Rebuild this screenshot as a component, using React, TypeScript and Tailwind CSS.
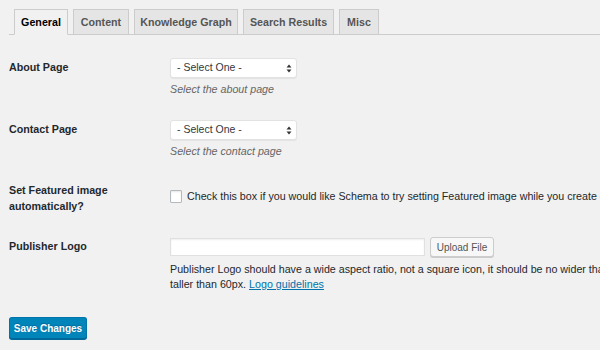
import { useState } from "react";

const tabs = [
  { label: "General", w: "w-[54px]" },
  { label: "Content", w: "w-[56px]" },
  { label: "Knowledge Graph", w: "w-[104px]" },
  { label: "Search Results", w: "w-[91px]" },
  { label: "Misc", w: "w-[40px]" },
];

const SelectBox = () => (
  <div className="w-[127px] h-[20px] bg-white border border-[#e2e2e2] rounded-[3px] shadow-[0_1px_1px_rgba(0,0,0,0.06)] flex items-center justify-between pl-[6px] pr-[4px] text-[10.5px] text-[#32373c]">
    <span>- Select One -</span>
    <svg width="6" height="9" viewBox="0 0 6 9">
      <path d="M0.5 3.5 L3 0.5 L5.5 3.5 Z" fill="#333" />
      <path d="M0.5 5.5 L3 8.5 L5.5 5.5 Z" fill="#333" />
    </svg>
  </div>
);

const App = () => {
  const [active, setActive] = useState("General");

  return (
    <div
      className="w-[600px] h-[350px] overflow-hidden bg-[#f1f1f1] text-[#23282d] pl-[9px] pt-[9px]"
      style={{ fontFamily: '"Liberation Sans", Arial, sans-serif' }}
    >
      {/* tab strip */}
      <div className="flex h-[26px] border-b border-[#cccccc] pl-[5px] gap-[5px] w-[700px]">
        {tabs.map((tab) => {
          const on = tab.label === active;
          return (
            <button
              key={tab.label}
              onClick={() => setActive(tab.label)}
              className={`${tab.w} h-[26px] border border-[#cccccc] flex items-center justify-center text-[10.7px] font-bold ${
                on
                  ? "bg-[#f1f1f1] text-black border-b-[#f1f1f1]"
                  : "bg-[#e5e5e5] text-[#555555]"
              }`}
            >
              {tab.label}
            </button>
          );
        })}
      </div>

      {/* About Page */}
      <div className="flex mt-[23px]">
        <div className="w-[161px] shrink-0 text-[10.7px] font-bold leading-[16px] pt-[1px]">About Page</div>
        <div>
          <SelectBox />
          <p className="mt-[4px] text-[10.7px] italic leading-[14px] text-[#666666]">Select the about page</p>
        </div>
      </div>

      {/* Contact Page */}
      <div className="flex mt-[24px]">
        <div className="w-[161px] shrink-0 text-[10.7px] font-bold leading-[16px] pt-[1px]">Contact Page</div>
        <div>
          <SelectBox />
          <p className="mt-[4px] text-[10.7px] italic leading-[14px] text-[#666666]">Select the contact page</p>
        </div>
      </div>

      {/* Featured image */}
      <div className="flex mt-[24px]">
        <div className="w-[161px] shrink-0 text-[10.7px] font-bold leading-[16px]">
          Set Featured image
          <br />
          automatically?
        </div>
        <div className="flex items-center gap-[5px] mt-[8px] h-[13px] whitespace-nowrap text-[10.7px]">
          <span className="w-[12px] h-[13px] bg-white border border-[#b4b9be] rounded-[1px] shadow-[inset_0_1px_2px_rgba(0,0,0,0.1)] shrink-0" />
          <span>Check this box if you would like Schema to try setting Featured image while you create content.</span>
        </div>
      </div>

      {/* Publisher Logo */}
      <div className="flex mt-[23px]">
        <div className="w-[161px] shrink-0 text-[10.7px] font-bold leading-[16px] pt-[1px]">Publisher Logo</div>
        <div>
          <div className="flex items-center gap-[5px]">
            <div className="w-[255px] h-[18px] bg-white border border-[#e0e0e0] shadow-[inset_0_1px_2px_rgba(0,0,0,0.07)]" />
            <button className="w-[64px] h-[20px] bg-[#f7f7f7] border border-[#cccccc] rounded-[3px] shadow-[0_1px_0_#cccccc] text-[10px] text-[#555555]">
              Upload File
            </button>
          </div>
          <p className="mt-[5px] text-[10.7px] leading-[15px] whitespace-nowrap">
            Publisher Logo should have a wide aspect ratio, not a square icon, it should be no wider than 600px, and no
            <br />
            taller than 60px.{" "}
            <a href="#" className="text-[#0073aa] underline">
              Logo guidelines
            </a>
          </p>
        </div>
      </div>

      <button className="mt-[25px] w-[78px] h-[22px] bg-[#0085ba] border border-[#0073aa] border-b-[#006799] rounded-[3px] text-white text-[10px] font-bold [text-shadow:0_-1px_1px_#006799] shadow-[0_1px_0_#006799]">
        Save Changes
      </button>
    </div>
  );
};

export default App;
